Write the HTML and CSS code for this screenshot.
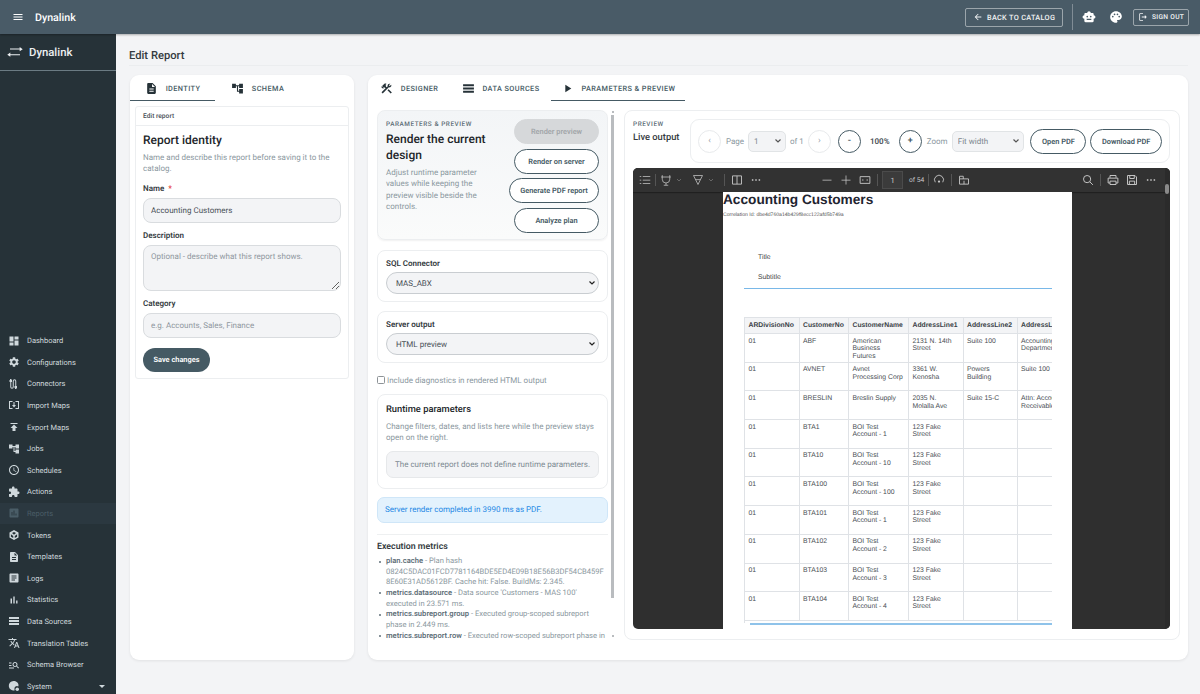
FILE: index.html
```html
<!DOCTYPE html>
<html lang="en">
<head>
<meta charset="UTF-8">
<meta name="viewport" content="width=device-width, initial-scale=1.0">
<title>Edit Report - Dynalink</title>
<link rel="stylesheet" href="styles.css">
</head>
<body>
<svg class="icon-defs" aria-hidden="true">
  <symbol id="i-menu" viewBox="0 0 24 24"><path d="M3 18h18v-2H3v2zm0-5h18v-2H3v2zm0-7v2h18V6H3z"/></symbol>
  <symbol id="i-back" viewBox="0 0 24 24"><path d="M20 11H7.83l5.59-5.59L12 4l-8 8 8 8 1.41-1.41L7.83 13H20v-2z"/></symbol>
  <symbol id="i-robot" viewBox="0 0 24 24"><path d="M20 9V7c0-1.1-.9-2-2-2h-3c0-1.66-1.34-3-3-3S9 3.34 9 5H6c-1.1 0-2 .9-2 2v2c-1.66 0-3 1.34-3 3s1.34 3 3 3v4c0 1.1.9 2 2 2h12c1.1 0 2-.9 2-2v-4c1.66 0 3-1.34 3-3s-1.34-3-3-3zM7.5 11.5C7.5 10.67 8.17 10 9 10s1.5.67 1.5 1.5S9.83 13 9 13s-1.5-.67-1.5-1.5zM16 17H8v-2h8v2zm-1-4c-.83 0-1.5-.67-1.5-1.5S14.17 10 15 10s1.5.67 1.5 1.5S15.83 13 15 13z"/></symbol>
  <symbol id="i-palette" viewBox="0 0 24 24"><path d="M12 2C6.49 2 2 6.49 2 12s4.49 10 10 10c1.38 0 2.5-1.12 2.5-2.5 0-.61-.23-1.2-.64-1.67-.08-.1-.13-.21-.13-.33 0-.28.22-.5.5-.5H16c3.31 0 6-2.69 6-6 0-4.96-4.49-9-10-9zm5.5 11c-.83 0-1.5-.67-1.5-1.5s.67-1.5 1.5-1.5 1.5.67 1.5 1.5-.67 1.5-1.5 1.5zm-3-4c-.83 0-1.5-.67-1.5-1.5S13.67 6 14.5 6s1.5.67 1.5 1.5S15.33 9 14.5 9zM5 11.5C5 10.67 5.67 10 6.5 10S8 10.67 8 11.5 7.33 13 6.5 13 5 12.33 5 11.5zm6-4c0 .83-.67 1.5-1.5 1.5S8 8.33 8 7.5 8.67 6 9.5 6s1.5.67 1.5 1.5z"/></symbol>
  <symbol id="i-logout" viewBox="0 0 24 24"><path d="M17 8l-1.41 1.41L17.17 11H9v2h8.17l-1.58 1.58L17 16l4-4zM5 5h7V3H5c-1.1 0-2 .9-2 2v14c0 1.1.9 2 2 2h7v-2H5V5z"/></symbol>
  <symbol id="i-swap" viewBox="0 0 24 18"><path d="M1 12.200h18.500v1.500H5v2.600L.4 13 5 9.700v2.500zM23 5.400H4.500V3.900H19V1.400l4.600 3.300L19 8V5.400z"/></symbol>
  <symbol id="i-dashboard" viewBox="0 0 24 24"><path d="M3 13h8V3H3v10zm0 8h8v-6H3v6zm10 0h8V11h-8v10zm0-18v6h8V3h-8z"/></symbol>
  <symbol id="i-settings" viewBox="0 0 24 24"><path d="M19.14 12.94c.04-.3.06-.61.06-.94 0-.32-.02-.64-.07-.94l2.03-1.58c.18-.14.23-.41.12-.61l-1.92-3.32c-.12-.22-.37-.29-.59-.22l-2.39.96c-.5-.38-1.03-.7-1.62-.94l-.36-2.54c-.04-.24-.24-.41-.48-.41h-3.84c-.24 0-.43.17-.47.41l-.36 2.54c-.59.24-1.13.57-1.62.94l-2.39-.96c-.22-.08-.47 0-.59.22L2.74 8.87c-.12.21-.08.47.12.61l2.03 1.58c-.05.3-.09.63-.09.94s.02.64.07.94l-2.03 1.58c-.18.14-.23.41-.12.61l1.92 3.32c.12.22.37.29.59.22l2.39-.96c.5.38 1.03.7 1.62.94l.36 2.54c.05.24.24.41.48.41h3.84c.24 0 .44-.17.47-.41l.36-2.54c.59-.24 1.13-.56 1.62-.94l2.39.96c.22.08.47 0 .59-.22l1.92-3.32c.12-.22.07-.47-.12-.61l-2.01-1.58zM12 15.6c-1.98 0-3.6-1.62-3.6-3.6s1.62-3.6 3.6-3.6 3.6 1.62 3.6 3.6-1.62 3.6-3.6 3.6z"/></symbol>
  <symbol id="i-cable" viewBox="0 0 24 24"><path d="M3 8V4h1V2h3v2h1v4H6.500v10a1.500 1.500 0 0 0 3 0V6a3.500 3.500 0 0 1 7 0v10H18v4h-1v2h-3v-2h-1v-4h1.500V6a1.500 1.500 0 0 0-3 0v12a3.500 3.500 0 0 1-7 0V8z"/></symbol>
  <symbol id="i-import" viewBox="0 0 24 24"><path d="M2 4h7v2H4v12h5v2H2zm20 0h-7v2h5v12h-5v2h7zM11 6h2v6h3l-4 5-4-5h3z"/></symbol>
  <symbol id="i-publish" viewBox="0 0 24 24"><path d="M5 4v2h14V4H5zm0 10h4v6h6v-6h4l-7-7-7 7z"/></symbol>
  <symbol id="i-tree" viewBox="0 0 24 24"><path d="M22 11V3h-7v3H9V3H2v8h7V8h2v10h4v3h7v-8h-7v3h-2V8h2v3z"/></symbol>
  <symbol id="i-clock" viewBox="0 0 24 24"><path d="M11.99 2C6.47 2 2 6.48 2 12s4.47 10 9.99 10C17.52 22 22 17.52 22 12S17.52 2 11.99 2zM12 20c-4.42 0-8-3.58-8-8s3.58-8 8-8 8 3.58 8 8-3.58 8-8 8zm.5-13H11v6l5.25 3.15.75-1.23-4.5-2.67z"/></symbol>
  <symbol id="i-extension" viewBox="0 0 24 24"><path d="M20.5 11H19V7c0-1.1-.9-2-2-2h-4V3.5C13 2.12 11.88 1 10.5 1S8 2.12 8 3.5V5H4c-1.1 0-1.99.9-1.99 2v3.8H3.5c1.49 0 2.7 1.21 2.7 2.7s-1.21 2.7-2.7 2.7H2V20c0 1.1.9 2 2 2h3.8v-1.5c0-1.49 1.21-2.7 2.7-2.7 1.49 0 2.7 1.21 2.7 2.7V22H17c1.1 0 2-.9 2-2v-4h1.5c1.38 0 2.5-1.12 2.5-2.5S21.88 11 20.5 11z"/></symbol>
  <symbol id="i-assessment" viewBox="0 0 24 24"><path d="M19 3H5c-1.1 0-2 .9-2 2v14c0 1.1.9 2 2 2h14c1.1 0 2-.9 2-2V5c0-1.1-.9-2-2-2zM9 17H7v-7h2v7zm4 0h-2V7h2v10zm4 0h-2v-4h2v4z"/></symbol>
  <symbol id="i-token" viewBox="0 0 24 24"><path fill-rule="evenodd" d="M12 2l9 5v10l-9 5-9-5V7zm0 4L8 8.200 12 11.500l4-3.300zM5.800 10.500v4.800l4.700 2.700v-4zm12.400 0-4.700 3.500v4l4.700-2.700z"/></symbol>
  <symbol id="i-doc" viewBox="0 0 24 24"><path d="M14 2H6c-1.100 0-1.990.9-1.990 2L4 20c0 1.100.89 2 1.990 2H18c1.100 0 2-.9 2-2V8l-6-6zm2 16H8v-2h8v2zm0-4H8v-2h8v2zm-3-5V3.500L18.500 9H13z"/></symbol>
  <symbol id="i-article" viewBox="0 0 24 24"><path d="M19 3H5c-1.100 0-2 .9-2 2v14c0 1.100.9 2 2 2h14c1.100 0 2-.9 2-2V5c0-1.100-.9-2-2-2zm-5 14H7v-2h7v2zm3-4H7v-2h10v2zm0-4H7V7h10v2z"/></symbol>
  <symbol id="i-bars" viewBox="0 0 24 24"><path d="M5 9.200h3V19H5zM10.600 5h2.800v14h-2.800zm5.600 8H19v6h-2.800z"/></symbol>
  <symbol id="i-list" viewBox="0 0 24 24"><path d="M2 4h20v4H2zM2 10h20v4H2zM2 16h20v4H2z"/></symbol>
  <symbol id="i-translate" viewBox="0 0 24 24"><path d="M12.870 15.070l-2.540-2.510.03-.03c1.740-1.940 2.980-4.170 3.710-6.530H17V4h-7V2H8v2H1v1.990h11.170C11.500 7.920 10.440 9.750 9 11.350 8.070 10.320 7.300 9.190 6.690 8h-2c.73 1.630 1.730 3.170 2.980 4.560l-5.090 5.020L4 19l5-5 3.110 3.110.76-2.040zM18.500 10h-2L12 22h2l1.120-3h4.750L21 22h2l-4.500-12zm-2.620 7l1.620-4.330L19.120 17h-3.240z"/></symbol>
  <symbol id="i-search-list" viewBox="0 0 24 24"><path d="M7 9H2V7h5v2zm0 3H2v2h5v-2zm13.590 7-3.830-3.830c-.8.52-1.740.83-2.760.83-2.760 0-5-2.240-5-5s2.240-5 5-5 5 2.240 5 5c0 1.020-.31 1.960-.83 2.750L22 17.590 20.590 19zM17 11c0-1.650-1.350-3-3-3s-3 1.350-3 3 1.350 3 3 3 3-1.350 3-3zM2 19h10v-2H2v2z"/></symbol>
  <symbol id="i-system" viewBox="0 0 24 24"><path d="M11 2a9.500 9.500 0 1 0 2 18.800v-2.300a5 5 0 0 1 7.500-5.500c.3-1 .5-2 .5-3C21 5.500 16.500 2 11 2z"/><circle cx="18.500" cy="18.500" r="3.500"/></symbol>
  <symbol id="i-tools" viewBox="0 0 24 24"><path d="M13.780 15.300 19.780 21.300 21.890 19.200 15.890 13.200zM17.500 10c1.930 0 3.500-1.570 3.500-3.500 0-.58-.16-1.120-.41-1.600l-2.700 2.700-1.490-1.490 2.700-2.700c-.48-.25-1.020-.41-1.600-.41C15.570 3 14 4.570 14 6.500c0 .41.08.8.21 1.160l-1.850 1.850-1.780-1.780.71-.71-1.410-1.410L12 3.490c-1.170-1.170-3.070-1.170-4.240 0L4.220 7.030l1.410 1.410H2.810l-.71.71 3.540 3.540.71-.71V9.150l1.410 1.410.71-.71 1.780 1.780-7.410 7.410 2.120 2.120L16.340 9.790c.36.13.75.21 1.160.21z"/></symbol>
  <symbol id="i-play" viewBox="0 0 24 24"><path d="M8 5v14l11-7z"/></symbol>
  <symbol id="v-outline" viewBox="0 0 16 16"><path d="M1 3h2v1H1zM5 3h10v1H5zM1 7.500h2v1H1zM5 7.500h10v1H5zM1 12h2v1H1zM5 12h10v1H5z"/></symbol>
  <symbol id="v-highlight" viewBox="0 0 16 16"><path fill="none" stroke="currentColor" d="M1.500 4h13M3 1.500v5.500a5 5 0 0 0 10 0V1.500M8 12v3M5 15h6"/></symbol>
  <symbol id="v-draw" viewBox="0 0 16 16"><path fill="none" stroke="currentColor" d="M2 2h12L8 14zM5 7.500h6"/></symbol>
  <symbol id="v-chev" viewBox="0 0 16 16"><path fill="none" stroke="currentColor" stroke-width="1.200" d="M4 6l4 4 4-4"/></symbol>
  <symbol id="v-split" viewBox="0 0 16 16"><path fill="none" stroke="currentColor" stroke-width="1.200" d="M2 2.500h12v11H2zM8 2.500v11"/></symbol>
  <symbol id="v-dots" viewBox="0 0 16 16"><path d="M2.500 7h2v2h-2zM7 7h2v2H7zM11.500 7h2v2h-2z"/></symbol>
  <symbol id="v-minus" viewBox="0 0 16 16"><path d="M2 7.500h12v1H2z"/></symbol>
  <symbol id="v-plus" viewBox="0 0 16 16"><path d="M2 7.500h5.500V2h1v5.500H14v1H8.500V14h-1V8.500H2z"/></symbol>
  <symbol id="v-fit" viewBox="0 0 16 16"><path fill="none" stroke="currentColor" stroke-width="1.200" d="M1.500 3.500h13v9h-13zM4 8h2M10 8h2"/></symbol>
  <symbol id="v-rotate" viewBox="0 0 16 16"><path fill="none" stroke="currentColor" stroke-width="1.200" d="M3 11a6 6 0 1 1 10 0"/><circle cx="8" cy="10" r="1.500"/></symbol>
  <symbol id="v-pages" viewBox="0 0 16 16"><path fill="none" stroke="currentColor" stroke-width="1.200" d="M2 6.500h12v7H2zM2 6.500V3h5v3.500M8 9v4.500"/></symbol>
  <symbol id="v-search" viewBox="0 0 16 16"><path fill="none" stroke="currentColor" stroke-width="1.300" d="M6.800 2a4.800 4.800 0 1 1 0 9.600 4.800 4.800 0 0 1 0-9.600zM10.500 10.500 14.500 14.500"/></symbol>
  <symbol id="v-print" viewBox="0 0 16 16"><path fill="none" stroke="currentColor" stroke-width="1.300" d="M4 5V2h8v3M4 12H1.500V5.500h13V12H12M4 9.500h8V14H4z"/></symbol>
  <symbol id="v-save" viewBox="0 0 16 16"><path fill="none" stroke="currentColor" stroke-width="1.300" d="M2 2h10l2 2v10H2zM5 2v4h6V2M4.500 14V9.500h7V14"/></symbol>
</svg>

<header class="topbar">
  <svg class="topbar-menu"><use href="#i-menu"/></svg>
  <span class="topbar-brand">Dynalink</span>
  <div class="topbar-actions">
    <a class="outline-btn back-btn"><svg><use href="#i-back"/></svg>BACK TO CATALOG</a>
    <span class="topbar-sep"></span>
    <svg class="topbar-icon robot-icon"><use href="#i-robot"/></svg>
    <svg class="topbar-icon palette-icon"><use href="#i-palette"/></svg>
    <a class="outline-btn signout-btn"><svg><use href="#i-logout"/></svg>SIGN OUT</a>
  </div>
</header>

<div class="shell">
  <aside class="sidebar">
    <div class="sidebar-brand">
      <svg><use href="#i-swap"/></svg>
      <span>Dynalink</span>
    </div>
    <nav class="sidebar-nav">
      <a class="nav-item"><svg><use href="#i-dashboard"/></svg>Dashboard</a>
      <a class="nav-item"><svg><use href="#i-settings"/></svg>Configurations</a>
      <a class="nav-item"><svg><use href="#i-cable"/></svg>Connectors</a>
      <a class="nav-item"><svg><use href="#i-import"/></svg>Import Maps</a>
      <a class="nav-item"><svg><use href="#i-publish"/></svg>Export Maps</a>
      <a class="nav-item"><svg><use href="#i-tree"/></svg>Jobs</a>
      <a class="nav-item"><svg><use href="#i-clock"/></svg>Schedules</a>
      <a class="nav-item"><svg><use href="#i-extension"/></svg>Actions</a>
      <a class="nav-item active"><svg><use href="#i-assessment"/></svg>Reports</a>
      <a class="nav-item"><svg><use href="#i-token"/></svg>Tokens</a>
      <a class="nav-item"><svg><use href="#i-doc"/></svg>Templates</a>
      <a class="nav-item"><svg><use href="#i-article"/></svg>Logs</a>
      <a class="nav-item"><svg><use href="#i-bars"/></svg>Statistics</a>
      <a class="nav-item"><svg><use href="#i-list"/></svg>Data Sources</a>
      <a class="nav-item"><svg><use href="#i-translate"/></svg>Translation Tables</a>
      <a class="nav-item"><svg><use href="#i-search-list"/></svg>Schema Browser</a>
      <a class="nav-item"><svg><use href="#i-system"/></svg>System<span class="nav-caret"></span></a>
    </nav>
  </aside>

  <main class="content">
    <h1 class="page-title">Edit Report</h1>
    <div class="panels">

      <section class="panel panel-left">
        <div class="tabs">
          <a class="tab tab-identity active"><svg><use href="#i-doc"/></svg>IDENTITY</a>
          <a class="tab tab-identity"><svg><use href="#i-tree"/></svg>SCHEMA</a>
        </div>
        <div class="identity-body">
          <div class="identity-card">
            <div class="identity-head">Edit report</div>
            <form class="identity-form">
              <h2 class="section-title">Report identity</h2>
              <p class="muted identity-note">Name and describe this report before saving it to the catalog.</p>
              <label class="field-label">Name <span class="required">*</span></label>
              <input class="text-input" type="text" value="Accounting Customers">
              <label class="field-label">Description</label>
              <textarea class="text-input text-area" placeholder="Optional - describe what this report shows."></textarea>
              <label class="field-label">Category</label>
              <input class="text-input" type="text" placeholder="e.g. Accounts, Sales, Finance">
              <button class="save-btn" type="button">Save changes</button>
            </form>
          </div>
        </div>
      </section>

      <section class="panel panel-right">
        <div class="tabs">
          <a class="tab tab-designer"><svg><use href="#i-tools"/></svg>DESIGNER</a>
          <a class="tab tab-sources"><svg><use href="#i-list"/></svg>DATA SOURCES</a>
          <a class="tab tab-params active"><svg><use href="#i-play"/></svg>PARAMETERS &amp; PREVIEW</a>
        </div>
        <div class="designer-body">

          <div class="controls-col">
            <div class="box hero">
              <div class="hero-text">
                <div class="eyebrow">PARAMETERS &amp; PREVIEW</div>
                <h2 class="hero-title">Render the current design</h2>
                <p class="muted">Adjust runtime parameter values while keeping the preview visible beside the controls.</p>
              </div>
              <div class="hero-actions">
                <button class="pill-btn disabled" type="button">Render preview</button>
                <button class="pill-btn" type="button">Render on server</button>
                <button class="pill-btn wide" type="button">Generate PDF report</button>
                <button class="pill-btn" type="button">Analyze plan</button>
              </div>
            </div>

            <div class="box select-box">
              <label class="field-label">SQL Connector</label>
              <select class="pill-select"><option>MAS_ABX</option></select>
            </div>
            <div class="box select-box">
              <label class="field-label">Server output</label>
              <select class="pill-select"><option>HTML preview</option></select>
            </div>

            <label class="check-row"><input type="checkbox">Include diagnostics in rendered HTML output</label>

            <div class="box runtime-box">
              <h3 class="runtime-title">Runtime parameters</h3>
              <p class="muted">Change filters, dates, and lists here while the preview stays open on the right.</p>
              <div class="runtime-empty">The current report does not define runtime parameters.</div>
            </div>

            <div class="alert-info">Server render completed in 3990 ms as PDF.</div>

            <div class="metrics">
              <h3 class="metrics-title">Execution metrics</h3>
              <ul class="metrics-list">
                <li><b>plan.cache</b> - Plan hash 0824C5DAC01FCD7781164BDE5ED4E09B18E56B3DF54CB459F8E60E31AD5612BF. Cache hit: False. BuildMs: 2.345.</li>
                <li><b>metrics.datasource</b> - Data source 'Customers - MAS 100' executed in 23.571 ms.</li>
                <li><b>metrics.subreport.group</b> - Executed group-scoped subreport phase in 2.449 ms.</li>
                <li><b>metrics.subreport.row</b> - Executed row-scoped subreport phase in</li>
              </ul>
            </div>
          </div>
          <div class="controls-scroll"><span class="scroll-thumb"></span></div>

          <div class="preview-card">
            <div class="preview-head">
              <div class="preview-label">
                <div class="eyebrow">PREVIEW</div>
                <div class="preview-title">Live output</div>
              </div>
              <div class="preview-toolbar">
                <button class="round-btn faint" type="button">&#8249;</button>
                <span class="tool-label">Page</span>
                <select class="mini-select page-select"><option>1</option></select>
                <span class="tool-label of-label">of 1</span>
                <button class="round-btn faint" type="button">&#8250;</button>
                <button class="round-btn minus-btn" type="button">-</button>
                <span class="zoom-value">100%</span>
                <button class="round-btn" type="button">+</button>
                <span class="tool-label zoom-label">Zoom</span>
                <select class="mini-select zoom-select"><option>Fit width</option></select>
                <button class="pill-btn open-btn" type="button">Open PDF</button>
                <button class="pill-btn download-btn" type="button">Download PDF</button>
              </div>
            </div>

            <div class="pdf-viewer">
              <div class="pdf-toolbar">
                <div class="pdf-group">
                  <svg class="pdf-icon"><use href="#v-outline"/></svg>
                  <span class="pdf-sep sep-tight"></span>
                  <svg class="pdf-icon"><use href="#v-highlight"/></svg>
                  <svg class="pdf-chev"><use href="#v-chev"/></svg>
                  <svg class="pdf-icon draw-gap"><use href="#v-draw"/></svg>
                  <svg class="pdf-chev"><use href="#v-chev"/></svg>
                  <span class="pdf-sep sep-wide"></span>
                  <svg class="pdf-icon"><use href="#v-split"/></svg>
                  <svg class="pdf-icon gap-left"><use href="#v-dots"/></svg>
                </div>
                <div class="pdf-group pdf-group-mid">
                  <svg class="pdf-icon"><use href="#v-minus"/></svg>
                  <svg class="pdf-icon gap-left"><use href="#v-plus"/></svg>
                  <svg class="pdf-icon gap-left"><use href="#v-fit"/></svg>
                  <span class="pdf-sep"></span>
                  <span class="pdf-page-box">1</span>
                  <span class="pdf-page-of">of 54</span>
                  <span class="pdf-sep sep-tight"></span>
                  <svg class="pdf-icon"><use href="#v-rotate"/></svg>
                  <span class="pdf-sep"></span>
                  <svg class="pdf-icon"><use href="#v-pages"/></svg>
                </div>
                <div class="pdf-group pdf-group-end">
                  <svg class="pdf-icon"><use href="#v-search"/></svg>
                  <span class="pdf-sep"></span>
                  <svg class="pdf-icon"><use href="#v-print"/></svg>
                  <svg class="pdf-icon gap-left"><use href="#v-save"/></svg>
                  <svg class="pdf-icon gap-left"><use href="#v-dots"/></svg>
                </div>
              </div>

              <div class="pdf-page">
                <div class="pdf-doc-title">Accounting Customers</div>
                <div class="pdf-correlation">Correlation Id: dbe4d760a14b429f8ecc122afd5b749a</div>
                <div class="pdf-band">
                  <div class="pdf-band-line">Title</div>
                  <div class="pdf-band-line">Subtitle</div>
                </div>
                <div class="pdf-table-wrap">
                  <table class="pdf-table">
                    <colgroup>
                      <col class="c1"><col class="c2"><col class="c3"><col class="c4"><col class="c5"><col class="c6">
                    </colgroup>
                    <thead>
                      <tr><th>ARDivisionNo</th><th>CustomerNo</th><th>CustomerName</th><th>AddressLine1</th><th>AddressLine2</th><th>AddressLine3</th></tr>
                    </thead>
                    <tbody>
                      <tr><td>01</td><td>ABF</td><td>American Business Futures</td><td>2131 N. 14th Street</td><td>Suite 100</td><td>Accounting Department</td></tr>
                      <tr><td>01</td><td>AVNET</td><td>Avnet Processing Corp</td><td>3361 W. Kenosha</td><td>Powers Building</td><td>Suite 100</td></tr>
                      <tr><td>01</td><td>BRESLIN</td><td>Breslin Supply</td><td>2035 N. Molalla Ave</td><td>Suite 15-C</td><td>Attn: Accounts Receivable</td></tr>
                      <tr><td>01</td><td>BTA1</td><td>BOI Test Account - 1</td><td>123 Fake Street</td><td></td><td></td></tr>
                      <tr><td>01</td><td>BTA10</td><td>BOI Test Account - 10</td><td>123 Fake Street</td><td></td><td></td></tr>
                      <tr><td>01</td><td>BTA100</td><td>BOI Test Account - 100</td><td>123 Fake Street</td><td></td><td></td></tr>
                      <tr><td>01</td><td>BTA101</td><td>BOI Test Account - 1</td><td>123 Fake Street</td><td></td><td></td></tr>
                      <tr><td>01</td><td>BTA102</td><td>BOI Test Account - 2</td><td>123 Fake Street</td><td></td><td></td></tr>
                      <tr><td>01</td><td>BTA103</td><td>BOI Test Account - 3</td><td>123 Fake Street</td><td></td><td></td></tr>
                      <tr><td>01</td><td>BTA104</td><td>BOI Test Account - 4</td><td>123 Fake Street</td><td></td><td></td></tr>
                    </tbody>
                  </table>
                </div>
                <div class="pdf-foot-line"></div>
              </div>

              <div class="pdf-scrollbar"><span class="pdf-thumb"></span></div>
            </div>
          </div>

        </div>
      </section>
    </div>
  </main>
</div>
</body>
</html>
```

FILE: styles.css
```css
/* Page frame */
html, body {
    height: 100%;
}

body {
    margin: 0;
    overflow: hidden;
    display: flex;
    flex-direction: column;
    background-color: #f3f4f6;
    color: #212529;
    font-family: Roboto, "Liberation Sans", sans-serif;
    font-size: 8px;
    text-rendering: geometricPrecision;
}

input, select, textarea, button {
    text-rendering: geometricPrecision;
}

svg {
    fill: currentColor;
    flex-shrink: 0;
}

.icon-defs {
    display: none;
}

p, h1, h2, h3, ul {
    margin: 0;
}

/* Top bar */
.topbar {
    height: 34px;
    flex-shrink: 0;
    display: flex;
    align-items: center;
    padding: 0 11px 0 12px;
    background-color: #495b67;
    color: #fff;
    box-shadow: 0 1px 2px rgba(0,0,0,0.3);
    position: relative;
    z-index: 2;
}

.topbar-menu {
    width: 12px;
    height: 12px;
}

.topbar-brand {
    margin-left: 11px;
    font-size: 10.67px;
    font-weight: 500;
}

.topbar-actions {
    margin-left: auto;
    display: flex;
    align-items: center;
}

.outline-btn {
    display: flex;
    align-items: center;
    box-sizing: border-box;
    border: 1px solid rgba(255,255,255,0.45);
    border-radius: 2px;
    font-weight: 500;
    letter-spacing: 0.3px;
    color: #f2f4f5;
}

.back-btn {
    width: 98px;
    height: 19px;
    padding-left: 7px;
    gap: 4px;
    font-size: 7.33px;
}

.back-btn svg {
    width: 10px;
    height: 10px;
}

.signout-btn {
    width: 56px;
    height: 17px;
    padding-left: 4px;
    gap: 4px;
    font-size: 6.67px;
}

.signout-btn svg {
    width: 10px;
    height: 10px;
}

.topbar-sep {
    width: 1px;
    height: 26px;
    margin: 0 9px;
    background-color: rgba(255,255,255,0.3);
}

.topbar-icon {
    width: 14px;
    height: 14px;
}

.palette-icon {
    margin-left: 13px;
    margin-right: 10px;
}

/* Sidebar */
.shell {
    flex: 1;
    min-height: 0;
    display: flex;
}

.sidebar {
    width: 116px;
    flex-shrink: 0;
    display: flex;
    flex-direction: column;
    background-color: #263238;
    color: #cfd8dc;
}

.sidebar-brand {
    height: 37px;
    flex-shrink: 0;
    box-sizing: border-box;
    display: flex;
    align-items: center;
    gap: 6px;
    padding: 0 0 1px 7px;
    border-bottom: 1px solid #6b7b83;
    color: #eceff1;
    font-size: 11.33px;
    font-weight: 500;
}

.sidebar-brand svg {
    width: 16px;
    height: 12px;
}

.sidebar-nav {
    margin-top: auto;
    margin-bottom: -3px;
    display: flex;
    flex-direction: column;
}

.nav-item {
    height: 21.6px;
    display: flex;
    align-items: center;
    padding-left: 8px;
    font-size: 7.5px;
    color: #cfd8dc;
}

.nav-item svg {
    width: 12px;
    height: 12px;
    margin-right: 7px;
}

.nav-item.active {
    background-color: #2b3840;
    color: #4a5d67;
}

.nav-caret {
    margin-left: auto;
    margin-right: 11px;
    border-left: 3px solid transparent;
    border-right: 3px solid transparent;
    border-top: 3px solid #cfd8dc;
}

/* Main area */
.content {
    flex: 1;
    min-width: 0;
    display: flex;
    flex-direction: column;
    padding: 0 12px 34px 13px;
}

.page-title {
    height: 32px;
    flex-shrink: 0;
    box-sizing: border-box;
    padding-top: 15px;
    border-bottom: 1px solid #ebedef;
    font-size: 11.2px;
    font-weight: 500;
    line-height: 14px;
    color: #343a40;
}

.panels {
    flex: 1;
    min-height: 0;
    display: flex;
    gap: 14px;
    margin-top: 9px;
}

.panel {
    display: flex;
    flex-direction: column;
    min-height: 0;
    background-color: #fff;
    border-radius: 9px;
    box-shadow: 0 1px 3px rgba(0,0,0,0.08);
}

.panel-left {
    width: 224px;
    flex-shrink: 0;
    margin-left: 1px;
}

.panel-right {
    flex: 1;
    min-width: 0;
}

/* Tabs */
.tabs {
    height: 26px;
    flex-shrink: 0;
    display: flex;
}

.tab {
    box-sizing: border-box;
    height: 26px;
    display: flex;
    align-items: center;
    justify-content: center;
    gap: 8px;
    font-size: 7.33px;
    font-weight: 500;
    letter-spacing: 0.4px;
    color: #455a64;
}

.tab svg {
    width: 13px;
    height: 13px;
    color: #263238;
}

.tab.active {
    border-bottom: 1px solid #455a64;
    padding-top: 1px;
}

.tab-identity {
    width: 85px;
}

.tab-designer {
    width: 82px;
}

.tab-sources {
    width: 101px;
}

.tab-params {
    width: 134px;
}

/* Identity form */
.identity-body {
    padding: 5px;
}

.identity-card {
    border: 1px solid #eceef0;
    border-radius: 3px;
}

.identity-head {
    height: 18px;
    padding-left: 7px;
    line-height: 18px;
    border-bottom: 1px solid #eceef0;
    font-size: 6.67px;
    font-weight: 500;
    color: #495057;
}

.identity-form {
    display: flex;
    flex-direction: column;
    padding: 7px 7px 6px;
}

.section-title {
    font-size: 12px;
    font-weight: 500;
    line-height: 14px;
    color: #212529;
}

.muted {
    font-size: 8px;
    line-height: 11.4px;
    color: #8b98a0;
}

.identity-note {
    margin-top: 5px;
}

.field-label {
    display: block;
    margin: 8px 0 4px;
    font-size: 8px;
    font-weight: 600;
    line-height: 10px;
    color: #343a40;
}

.identity-note + .field-label {
    margin-top: 9px;
}

.required {
    color: #e53935;
    margin-left: 2px;
}

.text-input {
    box-sizing: border-box;
    width: 100%;
    height: 25px;
    padding: 0 7px;
    background-color: #f3f4f6;
    border: 1px solid #d9dcdf;
    border-radius: 8px;
    font-family: inherit;
    font-size: 8px;
    color: #495057;
    outline: none;
}

.text-input::placeholder {
    color: #8f979e;
}

.text-area {
    display: block;
    height: 46px;
    padding-top: 6px;
}

.save-btn {
    align-self: flex-start;
    width: 67px;
    height: 24px;
    margin-top: 10px;
    padding: 0;
    border: none;
    border-radius: 12px;
    background-color: #455a64;
    color: #fff;
    font-family: inherit;
    font-size: 7.4px;
    font-weight: 600;
}

/* Designer layout */
.designer-body {
    flex: 1;
    min-height: 0;
    position: relative;
    display: flex;
    padding: 9px 8px 20px 9px;
}

.controls-col {
    width: 231px;
    flex-shrink: 0;
    margin-right: 16px;
    overflow: hidden;
    display: flex;
    flex-direction: column;
    align-items: stretch;
}

/* Headless run hides native scrollbars, so this one is drawn over the column */
.controls-scroll {
    position: absolute;
    left: 243px;
    top: 9px;
    bottom: 20px;
    width: 3px;
}

.controls-scroll::before {
    content: "";
    position: absolute;
    left: 0.5px;
    top: 1px;
    width: 2px;
    height: 2px;
    background-color: #b9bcbf;
}

.controls-scroll::after {
    content: "";
    position: absolute;
    left: 0.5px;
    bottom: 3px;
    width: 2px;
    height: 2px;
    background-color: #b9bcbf;
}

.scroll-thumb {
    display: block;
    height: 483px;
    margin-top: 5px;
    background-color: #b9bcbf;
}

.box {
    flex-shrink: 0;
    box-sizing: border-box;
    width: 231px;
    border: 1px solid #eceef0;
    border-radius: 8px;
    background-color: #fff;
}

.hero {
    height: 130px;
    display: flex;
    padding: 8px 8px 0;
    background: linear-gradient(180deg, #f3f5f7 0%, #fafbfb 100%);
    box-shadow: 0 1px 2px rgba(0,0,0,0.06);
}

.hero-text {
    width: 103px;
    flex-shrink: 0;
    padding-top: 1px;
}

.eyebrow {
    font-size: 6.4px;
    font-weight: 500;
    letter-spacing: 0.55px;
    line-height: 9px;
    color: #5b6b75;
}

.hero-title {
    margin: 2px 0 4px;
    font-size: 12px;
    font-weight: 500;
    line-height: 16px;
    color: #212529;
}

.hero-actions {
    flex: 1;
    display: flex;
    flex-direction: column;
    align-items: flex-end;
    gap: 4.6px;
}

.pill-btn {
    box-sizing: border-box;
    width: 85px;
    height: 25px;
    padding: 0;
    background-color: #fff;
    border: 1px solid #455a64;
    border-radius: 13px;
    font-family: inherit;
    font-size: 7.4px;
    font-weight: 600;
    color: #455a64;
    white-space: nowrap;
}

.pill-btn.wide {
    width: 90px;
}

.pill-btn.disabled {
    background-color: #d6d8da;
    border-color: #d6d8da;
    color: #a2a6a9;
}

.select-box {
    height: 52px;
    margin-top: 10px;
    padding: 0 8px;
}

.select-box + .select-box {
    margin-top: 9px;
}

.select-box .field-label {
    margin: 8px 0 3px;
}

.pill-select {
    box-sizing: border-box;
    display: block;
    width: 100%;
    height: 22px;
    padding-left: 9px;
    appearance: none;
    background: #f3f4f6 url("data:image/svg+xml,%3Csvg xmlns='http://www.w3.org/2000/svg' width='6' height='4'%3E%3Cpath d='M.5.5 3 3 5.500.5' fill='none' stroke='%23222' stroke-width='1.200'/%3E%3C/svg%3E") no-repeat right 3px center;
    border: 1px solid #c9cdd1;
    border-radius: 11px;
    font-family: inherit;
    font-size: 8px;
    color: #495057;
}

.check-row {
    flex-shrink: 0;
    display: flex;
    align-items: center;
    gap: 2px;
    height: 12px;
    margin: 11px 0 8px;
    font-size: 8px;
    color: #8b98a0;
}

.check-row input {
    appearance: none;
    box-sizing: border-box;
    width: 8px;
    height: 8px;
    margin: 0;
    border: 1px solid #8d9397;
    border-radius: 1.5px;
    background-color: #fff;
}

.runtime-box {
    height: 95px;
    padding: 8px 8px 0;
}

.runtime-title {
    margin-bottom: 5px;
    font-size: 9.33px;
    font-weight: 500;
    line-height: 13px;
    color: #212529;
}

.runtime-empty {
    box-sizing: border-box;
    height: 27px;
    margin-top: 7px;
    padding-left: 8px;
    line-height: 26px;
    background-color: #f3f4f6;
    border: 1px solid #e6e8ea;
    border-radius: 7px;
    font-size: 8px;
    color: #7d8a92;
}

.alert-info {
    flex-shrink: 0;
    box-sizing: border-box;
    width: 231px;
    height: 26px;
    margin-top: 8px;
    padding-left: 7px;
    line-height: 24px;
    background-color: #e3f2fd;
    border: 1px solid #cfe6f8;
    border-radius: 7px;
    font-size: 8px;
    color: #1e88e5;
}

.metrics {
    flex-shrink: 0;
    margin-top: 11px;
    padding-top: 6px;
    padding-bottom: 30px;
    border-top: 1px solid #eef0f1;
}

.metrics-title {
    font-size: 8.8px;
    font-weight: 600;
    line-height: 12px;
    color: #343a40;
}

.metrics-list {
    margin-top: 3px;
    padding-left: 9px;
    list-style: none;
    font-size: 7.6px;
    line-height: 10.66px;
    color: #8b98a0;
    overflow-wrap: anywhere;
}

.metrics-list li {
    position: relative;
}

.metrics-list li::before {
    content: "";
    position: absolute;
    left: -7px;
    top: 4.5px;
    width: 2px;
    height: 2px;
    border-radius: 50%;
    background-color: #5f6f79;
}

.metrics-list b {
    font-weight: 600;
    color: #5f6f79;
}

/* Preview */
.preview-card {
    flex: 1;
    min-width: 0;
    box-sizing: border-box;
    display: flex;
    flex-direction: column;
    padding: 8px 9px 10px 8px;
    border: 1px solid #eceef0;
    border-radius: 8px;
}

.preview-head {
    display: flex;
    flex-shrink: 0;
    height: 49px;
}

.preview-label {
    width: 57px;
    padding-top: 1px;
}

.preview-title {
    margin-top: 3px;
    font-size: 9.33px;
    font-weight: 500;
    line-height: 12px;
    color: #343a40;
}

.preview-toolbar {
    flex: 1;
    min-width: 0;
    box-sizing: border-box;
    height: 44px;
    display: flex;
    align-items: center;
    padding: 0 7px;
    border: 1px solid #eceef0;
    border-radius: 9px;
}

.round-btn {
    box-sizing: border-box;
    width: 23px;
    height: 23px;
    flex-shrink: 0;
    padding: 0;
    background-color: #fff;
    border: 1px solid #455a64;
    border-radius: 50%;
    font-family: inherit;
    font-size: 9px;
    font-weight: 600;
    color: #455a64;
}

.round-btn.faint {
    border-color: #e8eaec;
    color: #9aa3a9;
    font-weight: 400;
}

.minus-btn {
    margin-left: 7px;
}

.tool-label {
    width: 17px;
    margin: 0 5px;
    font-size: 8px;
    color: #8b98a0;
    white-space: nowrap;
}

.of-label {
    width: 14px;
    margin: 0 4px;
}

.zoom-label {
    width: 20px;
}

.zoom-value {
    width: 38px;
    text-align: center;
    font-size: 8px;
    font-weight: 600;
    color: #495057;
}

.mini-select {
    box-sizing: border-box;
    height: 21px;
    padding-left: 5px;
    appearance: none;
    background: #f3f4f6 url("data:image/svg+xml,%3Csvg xmlns='http://www.w3.org/2000/svg' width='6' height='4'%3E%3Cpath d='M.5.5 3 3 5.500.5' fill='none' stroke='%23555' stroke-width='1.200'/%3E%3C/svg%3E") no-repeat right 4px center;
    border: 1px solid #e1e4e6;
    border-radius: 5px;
    font-family: inherit;
    font-size: 8px;
    color: #7b868d;
}

.page-select {
    width: 38px;
}

.zoom-select {
    width: 73px;
}

.open-btn {
    width: 56px;
    margin-left: 6px;
}

.download-btn {
    width: 72px;
    margin-left: 4px;
}

/* PDF viewer */
.pdf-viewer {
    flex: 1;
    min-height: 0;
    position: relative;
    display: flex;
    flex-direction: column;
    overflow: hidden;
    background-color: #2f2f2f;
    border-radius: 5px;
}

.pdf-toolbar {
    height: 24px;
    flex-shrink: 0;
    display: flex;
    align-items: center;
    padding-left: 6px;
    background-color: #323232;
    color: #c7c7c7;
    box-shadow: 0 1px 1px rgba(0,0,0,0.3);
}

.pdf-group {
    display: flex;
    align-items: center;
}

.pdf-group-mid {
    margin-left: 59px;
}

.pdf-group-end {
    margin-left: auto;
    margin-right: 13px;
}

.pdf-icon {
    width: 12px;
    height: 12px;
}

.pdf-chev {
    width: 8px;
    height: 8px;
    margin-left: 3px;
    color: #8a8a8a;
}

.gap-left {
    margin-left: 7px;
}

.draw-gap {
    margin-left: 9px;
}

.pdf-sep {
    width: 1px;
    height: 12px;
    margin: 0 6px;
    background-color: #555;
}

.sep-tight {
    margin: 0 4px;
}

.sep-wide {
    margin: 0 6px 0 9px;
}

.pdf-page-box {
    box-sizing: border-box;
    width: 21px;
    height: 18px;
    margin-left: -2px;
    text-align: center;
    line-height: 17px;
    background-color: #3b3b3b;
    border: 1px solid #4b4b4b;
    font-size: 7.5px;
}

.pdf-page-of {
    margin-left: 6px;
    font-size: 6.67px;
    white-space: nowrap;
}

.pdf-page {
    flex: 1;
    min-height: 0;
    width: 349px;
    box-sizing: border-box;
    margin-left: 90px;
    padding: 0 20px 0 21px;
    overflow: hidden;
    background-color: #fff;
    color: #333;
    font-family: "Liberation Sans", Arial, sans-serif;
    position: relative;
}

.pdf-doc-title {
    margin-left: -21px;
    font-size: 13.67px;
    font-weight: 700;
    line-height: 16px;
    color: #1f2430;
}

.pdf-correlation {
    margin-left: -21px;
    margin-top: 4px;
    font-size: 5.1px;
    line-height: 6px;
    color: #555;
    white-space: nowrap;
}

.pdf-band {
    height: 42px;
    margin-top: 29px;
    box-sizing: border-box;
    padding: 1px 0 0 14px;
    border-bottom: 1.5px solid #79b8e8;
}

.pdf-band-line {
    height: 20px;
    font-size: 6.8px;
    line-height: 20px;
    color: #444;
}

.pdf-table-wrap {
    margin-top: 28px;
    height: 306px;
    overflow: hidden;
    border-left: 1px solid #dfe2e6;
}

.pdf-table {
    table-layout: fixed;
    width: 330px;
    border-collapse: collapse;
    font-size: 6.8px;
    line-height: 7.67px;
}

.c1 { width: 54px; }
.c2 { width: 49.500px; }
.c3 { width: 60px; }
.c4 { width: 54.500px; }
.c5 { width: 54px; }
.c6 { width: 58px; }

.pdf-table th {
    height: 15px;
    padding: 0 3.5px;
    background-color: #f3f4f6;
    border: 1px solid #dfe2e6;
    border-left: none;
    text-align: left;
    font-size: 6.8px;
    font-weight: 700;
    color: #3a3f46;
    overflow: hidden;
    white-space: nowrap;
}

.pdf-table td {
    height: 28.7px;
    box-sizing: border-box;
    padding: 3.5px 4.5px 0 3.5px;
    vertical-align: top;
    border: 1px solid #dfe2e6;
    border-left: none;
    color: #4a4f55;
    overflow: hidden;
}

.pdf-foot-line {
    position: absolute;
    left: 27px;
    right: 20px;
    top: 431px;
    height: 2px;
    background-color: #8fc3ea;
}

.pdf-scrollbar {
    position: absolute;
    top: 0;
    right: 0;
    bottom: 0;
    width: 5px;
    background-color: #2b2b2b;
}

.pdf-thumb {
    display: block;
    width: 4px;
    height: 10px;
    margin-top: 16px;
    border-radius: 2px;
    background-color: #8a8a8a;
}
```
